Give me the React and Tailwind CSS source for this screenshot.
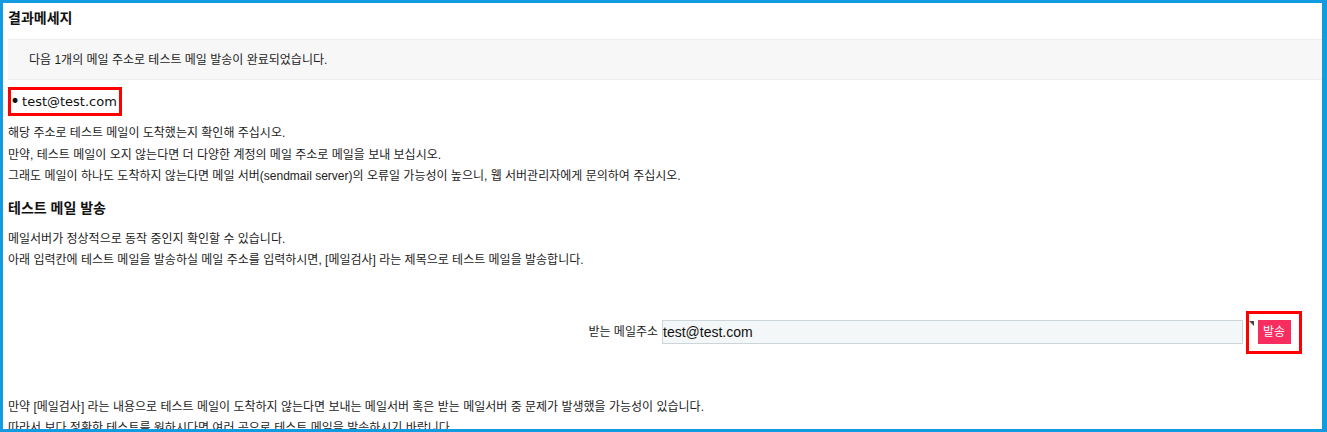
import React from 'react';

const kr = "font-['Liberation_Sans','Noto_Sans_CJK_KR',sans-serif]";

export default function App() {
  return (
    <div className={`h-[432px] w-[1327px] overflow-hidden border-[3px] border-r-[5px] border-[#139be2] bg-white text-[#1c1c1c] ${kr}`}>
      <div className="pl-[5px]">
        {/* 결과 */}
        <div className="h-[36px] pt-[5px] text-[14px] font-bold leading-[20px] text-[#111]">결과메세지</div>
        <div className="flex h-[41px] items-center border-y border-[#eeeeee] bg-[#f7f7f7] pl-[21px] text-[12px]">
          다음 1개의 메일 주소로 테스트 메일 발송이 완료되었습니다.
        </div>
        <div className="mt-[7px] flex h-[29px] w-[114px] items-center border-[3px] border-[#ff0000] font-['DejaVu_Sans',sans-serif] text-[13px] text-[#111]">
          <span className="-ml-[1px] mr-[2px] text-[17px] leading-none">•</span>test@test.com
        </div>
        <div className="mt-[7px] text-[12px] leading-[21.5px]">
          <p>해당 주소로 테스트 메일이 도착했는지 확인해 주십시오.</p>
          <p>만약, 테스트 메일이 오지 않는다면 더 다양한 계정의 메일 주소로 메일을 보내 보십시오.</p>
          <p>그래도 메일이 하나도 도착하지 않는다면 메일 서버(sendmail server)의 오류일 가능성이 높으니, 웹 서버관리자에게 문의하여 주십시오.</p>
        </div>

        {/* 테스트 메일 발송 */}
        <h2 className="mt-[8px] text-[14px] font-bold leading-[24px] text-[#111]">테스트 메일 발송</h2>
        <div className="mt-[9px] text-[12px] leading-[21px]">
          <p>메일서버가 정상적으로 동작 중인지 확인할 수 있습니다.</p>
          <p>아래 입력칸에 테스트 메일을 발송하실 메일 주소를 입력하시면, [메일검사] 라는 제목으로 테스트 메일을 발송합니다.</p>
        </div>

        <div className="mt-[40px] flex items-center justify-end pr-[20px]">
          <span className="mr-[4px] text-[12px]">받는 메일주소</span>
          <input
            defaultValue="test@test.com"
            className="h-[24px] w-[581px] border border-[#cbd5da] bg-[#f4f7f8] px-0 text-[14px] text-[#111] outline-none"
          />
          <div className="relative ml-[3px] flex h-[43px] w-[56px] items-center justify-center border-[3px] border-[#ff0000]">
            <svg className="absolute left-0 top-[7px]" width="5" height="5" viewBox="0 0 5 5">
              <polygon points="0,0 5,0 5,5" fill="#444" />
            </svg>
            <button className="h-[24px] w-[33px] bg-[#f72c5f] text-[12px] text-white">발송</button>
          </div>
        </div>

        <div className="mt-[43px] text-[12px] leading-[21px]">
          <p>만약 [메일검사] 라는 내용으로 테스트 메일이 도착하지 않는다면 보내는 메일서버 혹은 받는 메일서버 중 문제가 발생했을 가능성이 있습니다.</p>
          <p>따라서 보다 정확한 테스트를 원하시다면 여러 곳으로 테스트 메일을 발송하시기 바랍니다.</p>
        </div>
      </div>
    </div>
  );
}
